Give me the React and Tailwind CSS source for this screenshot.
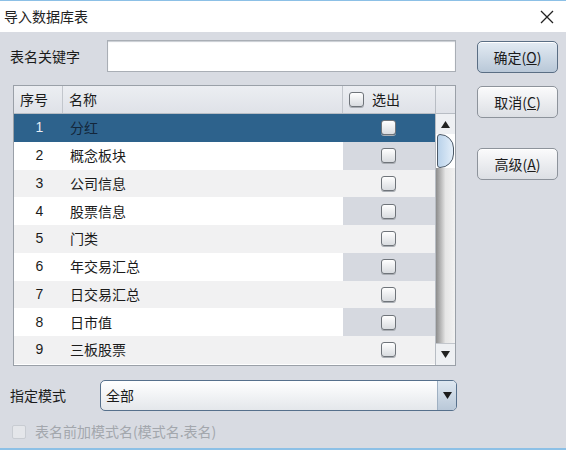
import React from "react";

const rows = [
  "分红",
  "概念板块",
  "公司信息",
  "股票信息",
  "门类",
  "年交易汇总",
  "日交易汇总",
  "日市值",
  "三板股票",
];

const font = { fontFamily: '"Noto Sans CJK SC", "Liberation Sans", sans-serif' };

function Box({ className = "" }) {
  return (
    <span
      className={
        "inline-block w-[15px] h-[15px] rounded-[3px] border border-[#6f747a] bg-gradient-to-b from-white to-[#d9dce0] shadow-[0_1px_0_#a9adb3] " +
        className
      }
    />
  );
}

function Btn({ label, k, primary }) {
  return (
    <button
      className={
        "w-[81px] h-[32px] rounded-[5px] border text-[14px] text-[#1b1b1b] flex items-center justify-center shadow-[inset_0_1px_0_#fff] " +
        (primary
          ? "border-[#5a6e84] bg-gradient-to-b from-[#e3ebf3] to-[#b9c8d8]"
          : "border-[#8d939b] bg-gradient-to-b from-[#fbfbfc] to-[#dcdfe4]")
      }
    >
      {label}(<span className="underline">{k}</span>)
    </button>
  );
}

export default function App() {
  return (
    <div className="w-[566px] h-[450px] flex flex-col bg-[#d8dbe2] text-[#1b1b1b] overflow-hidden" style={font}>
      <div className="h-[32px] bg-white border-t border-[#8cc0e6] flex items-center justify-between pl-[4px] pr-[12px]">
        <span className="text-[14px] text-[#222]">导入数据库表</span>
        <svg width="14" height="14" viewBox="0 0 14 14">
          <path d="M1 1 L13 13 M13 1 L1 13" stroke="#222" strokeWidth="1.3" />
        </svg>
      </div>

      <div className="flex-1 flex border-b-2 border-[#8cc0e6]">
        <div className="w-[458px] flex flex-col">
          <div className="flex items-center mt-[8px] h-[32px]">
            <span className="w-[107px] pl-[10px] text-[14px]">表名关键字</span>
            <div className="w-[349px] h-[32px] bg-white border border-[#a9aeb5] shadow-[inset_0_1px_1px_#c8ccd2]" />
          </div>

          <div className="ml-[13px] mt-[13px] w-[443px] h-[281px] border border-[#9aa0a8] bg-white flex">
            <div className="flex-1 flex flex-col">
              <div className="h-[28px] flex text-[14px] bg-gradient-to-b from-[#eceef2] to-[#dfe2e8] border-b border-[#b8bdc4]">
                <div className="w-[49px] flex items-center pl-[6px] border-r border-[#c2c6cc]">序号</div>
                <div className="w-[280px] flex items-center pl-[6px] border-r border-[#c2c6cc]">名称</div>
                <div className="flex-1 flex items-center pl-[6px] gap-[8px]">
                  <Box />
                  <span>选出</span>
                </div>
              </div>
              {rows.map((name, i) => {
                const sel = i === 0;
                const odd = i % 2 === 0;
                return (
                  <div
                    key={i}
                    className={
                      "h-[27.75px] flex text-[14px] " +
                      (sel ? "bg-[#2d628c]" : odd ? "bg-[#f1f1f2]" : "bg-white")
                    }
                  >
                    <div
                      className={"w-[49px] flex items-center justify-center pl-[2px] " + (sel ? "text-[#e8eef4]" : "")}
                      style={{ fontFamily: '"Liberation Sans", sans-serif' }}
                    >
                      {i + 1}
                    </div>
                    <div className={"w-[280px] flex items-center pl-[7px] " + (sel ? "text-[#13263a]" : "")}>{name}</div>
                    <div
                      className={
                        "flex-1 flex items-center justify-center pr-[1px] " +
                        (sel ? "" : odd ? "bg-[#f1f1f2]" : "bg-[#d6d9e0]")
                      }
                    >
                      <Box />
                    </div>
                  </div>
                );
              })}
            </div>
            <div className="w-[20px] flex flex-col border-l border-[#b8bdc4]">
              <div className="h-[28px] bg-gradient-to-b from-[#eceef2] to-[#dfe2e8] border-b border-[#b8bdc4]" />
              <div className="h-[20px] bg-[#eef0f3] flex items-center justify-center">
                <svg width="9" height="7" viewBox="0 0 9 7">
                  <path d="M4.5 0 L9 7 L0 7 Z" fill="#222" />
                </svg>
              </div>
              <div className="h-[34px] mx-[1px] rounded-r-[14px] rounded-l-[3px] border border-[#4b5866] bg-gradient-to-r from-[#b9d2ea] to-[#e3eef9]" />
              <div className="flex-1 bg-gradient-to-r from-[#8c8c8c] via-[#e6e6e6] to-[#f2f2f2]" />
              <div className="h-[22px] bg-[#eef0f3] flex items-center justify-center border-t border-[#c2c6cc]">
                <svg width="9" height="7" viewBox="0 0 9 7">
                  <path d="M0 0 L9 0 L4.5 7 Z" fill="#222" />
                </svg>
              </div>
            </div>
          </div>

          <div className="flex items-center mt-[14px] h-[31px]">
            <span className="w-[100px] pl-[10px] text-[14px]">指定模式</span>
            <div className="w-[357px] h-[31px] rounded-[5px] border border-[#56708c] bg-gradient-to-b from-white to-[#e4e7eb] flex items-center">
              <span className="flex-1 pl-[5px] text-[14px]">全部</span>
              <div className="w-[19px] h-full border-l border-[#9fb0c2] rounded-r-[4px] bg-gradient-to-b from-[#dfe8f1] to-[#b9c8d8] flex items-center justify-center">
                <svg width="9" height="7" viewBox="0 0 9 7">
                  <path d="M0 0 L9 0 L4.5 7 Z" fill="#1b1b1b" />
                </svg>
              </div>
            </div>
          </div>

          <div className="flex items-center mt-[10px] pl-[12px] gap-[9px]">
            <span className="w-[14px] h-[14px] rounded-[2px] border border-[#c8ccd2] bg-[#e4e6ea]" />
            <span className="text-[14px] text-[#a3a7ad]">表名前加模式名(模式名.表名)</span>
          </div>
        </div>

        <div className="flex flex-col pl-[19px] pt-[9px]">
          <Btn label="确定" k="O" primary />
          <div className="h-[13px]" />
          <Btn label="取消" k="C" />
          <div className="h-[30px]" />
          <Btn label="高级" k="A" />
        </div>
      </div>
    </div>
  );
}
